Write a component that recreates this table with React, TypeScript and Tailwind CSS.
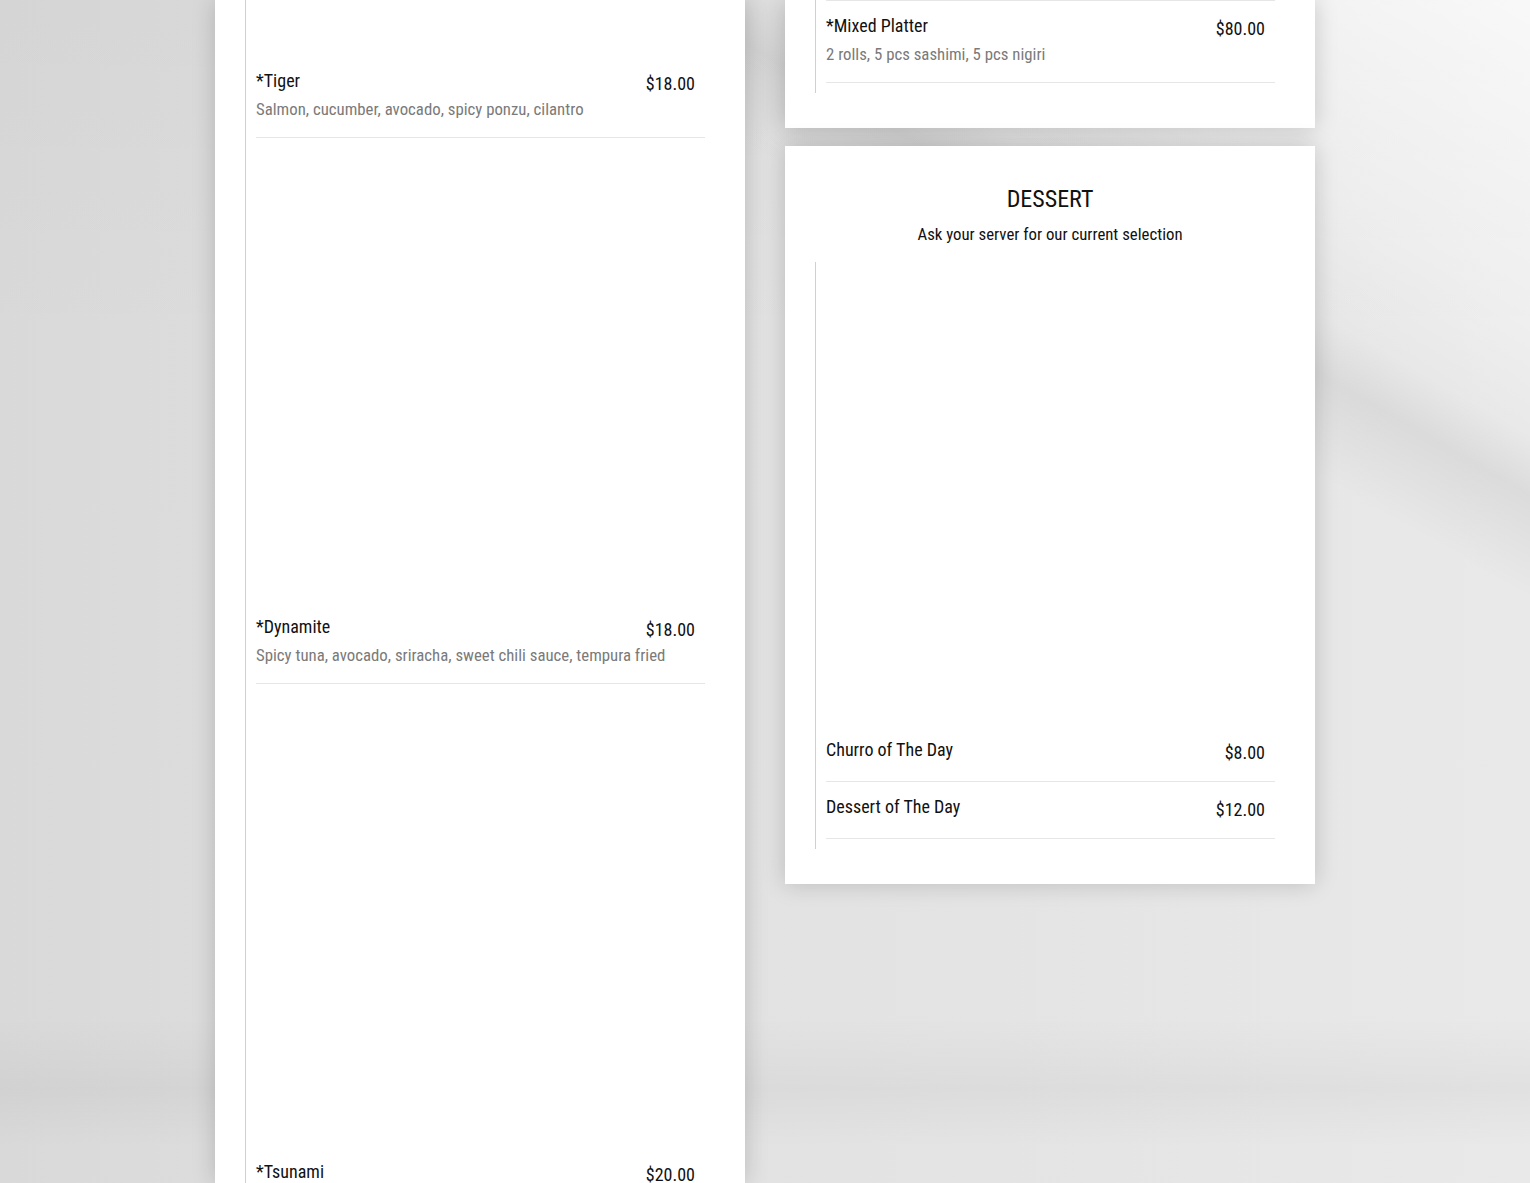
import React from "react";

type ItemProps = {
  name: string;
  price: string;
  desc?: string;
  img?: string;
};

function Item({ name, price, desc, img }: ItemProps) {
  return (
    <div>
      {img ? <div className={img} /> : null}
      <div className={desc ? "pt-[14px] pb-[17px]" : "pt-[14px] pb-[20px]"}>
        <div className="flex h-[22px] items-start justify-between pr-[10px]">
          <div className="text-[18px] leading-[22px] text-[#111]">{name}</div>
          <div className="mt-[3px] text-[18px] leading-[22px] text-[#111]">{price}</div>
        </div>
        {desc ? (
          <div className="mt-[6px] text-[16.8px] leading-[22px] text-[#7a7a7a]">{desc}</div>
        ) : null}
      </div>
      <div className="h-px bg-[#e6e6e6]" />
    </div>
  );
}

export default function App() {
  return (
    <div className="h-[1183px] overflow-hidden bg-[#e0e0e0] bg-[linear-gradient(210deg,rgba(255,255,255,0.75)_0%,rgba(255,255,255,0.3)_15%,rgba(255,255,255,0)_21%,rgba(0,0,0,0.06)_24%,rgba(255,255,255,0)_29%),linear-gradient(180deg,rgba(0,0,0,0.02)_0%,rgba(0,0,0,0)_30%,rgba(0,0,0,0)_86%,rgba(0,0,0,0.035)_92%,rgba(0,0,0,0)_97%),linear-gradient(90deg,#d9d9d9_0%,#e1e1e1_35%,#e4e4e4_65%,#e9e9e9_100%)] font-['Roboto_Condensed','Roboto',sans-serif] font-stretch-[80%]">
      <div className="mx-auto flex w-[1100px] items-start gap-[40px]">
        {/* Left column */}
        <div className="h-[1183px] w-[530px] bg-white pl-[30px] pr-[40px] shadow-[0_0_22px_rgba(0,0,0,0.18)]">
          <div className="h-full border-l border-[#f2dc3a] pl-[10px]">
            <Item
              img="h-[56px]"
              name="*Tiger"
              price="$18.00"
              desc="Salmon, cucumber, avocado, spicy ponzu, cilantro"
            />
            <Item
              img="h-[464px]"
              name="*Dynamite"
              price="$18.00"
              desc="Spicy tuna, avocado, sriracha, sweet chili sauce, tempura fried"
            />
            <Item
              img="h-[463px]"
              name="*Tsunami"
              price="$20.00"
              desc="Shrimp tempura, crab, avocado, eel sauce"
            />
          </div>
        </div>

        {/* Right column */}
        <div className="flex w-[530px] flex-col">
          <div className="bg-white pb-[35px] pl-[30px] pr-[40px] shadow-[0_0_22px_rgba(0,0,0,0.18)]">
            <div className="border-l border-[#f2dc3a] pb-[10px] pl-[10px]">
              <div className="h-px bg-[#e6e6e6]" />
              <Item
                name="*Mixed Platter"
                price="$80.00"
                desc="2 rolls, 5 pcs sashimi, 5 pcs nigiri"
              />
            </div>
          </div>

          <div className="mt-[18px] bg-white pb-[35px] pl-[30px] pr-[40px] pt-[39px] shadow-[0_0_22px_rgba(0,0,0,0.18)]">
            <div className="pl-[10px] text-center">
              <div className="text-[24px] uppercase leading-[28px] text-[#111]">Dessert</div>
              <div className="mt-[10px] text-[16.8px] leading-[22px] text-[#111]">
                Ask your server for our current selection
              </div>
            </div>
            <div className="mt-[17px] border-l border-[#f2dc3a] pb-[10px] pl-[10px]">
              <div className="h-[463px]" />
              <Item name="Churro of The Day" price="$8.00" />
              <Item name="Dessert of The Day" price="$12.00" />
            </div>
          </div>
        </div>
      </div>
    </div>
  );
}
